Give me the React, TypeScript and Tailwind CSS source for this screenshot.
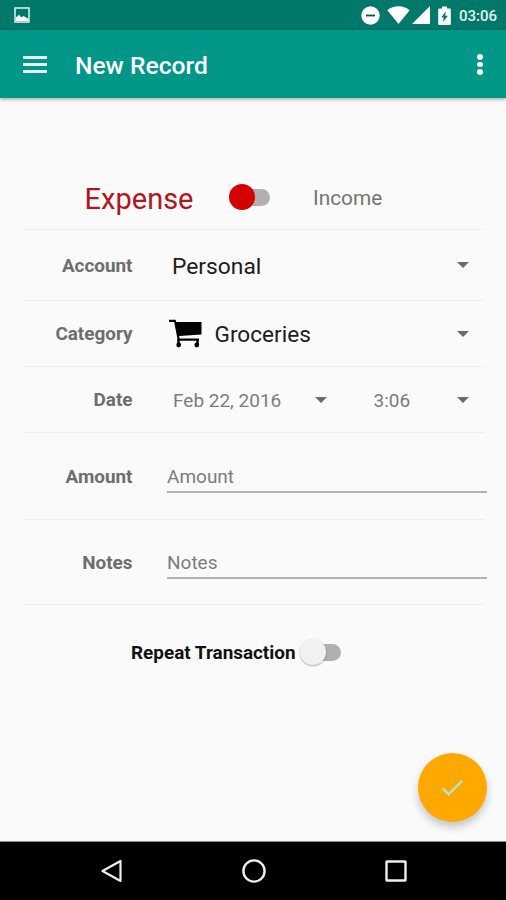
import { useState, type ReactNode } from "react";
import clsx from "clsx";

export default function App() {
  const [income, setIncome] = useState(false);
  const [repeat, setRepeat] = useState(false);

  return (
    <div className="relative flex h-[900px] w-[506px] flex-col overflow-hidden bg-[#fafafa] font-[Roboto,sans-serif]">
      <StatusBar />
      <AppBar title="New Record" />

      <main className="flex flex-1 flex-col pl-6 pr-[21px] pt-[67px]">
        <div className="flex h-[65px] items-center border-b border-[#efefef]">
          <span className="w-[169.5px] pt-1 text-right text-[29px] leading-none text-[#b3141c]">Expense</span>
          <Toggle label="Income" checked={income} onChange={setIncome} className="ml-[35px]" knobClassName="bg-[#d50000]" />
          <span className="ml-[43.5px] pt-[2px] text-[20.8px] leading-none text-[#757575]">Income</span>
        </div>

        <FormRow label="Account" className="h-[71px]">
          <Spinner className="ml-[39.5px] flex-1 pr-[16.5px] text-[22.8px] text-[#1c1c1c]">
            <span className="pt-1">Personal</span>
          </Spinner>
        </FormRow>

        <FormRow label="Category" className="h-[66px]">
          <Spinner className="ml-9 flex-1 pr-[16.5px] text-[22.6px] text-[#1c1c1c]">
            <CartIcon />
            <span className="ml-[13px] pt-1">Groceries</span>
          </Spinner>
        </FormRow>

        <FormRow label="Date" className="h-[66px]">
          <Spinner className="ml-[40.5px] w-[153.5px] text-[19px] text-[#7c7c7c]">
            <span className="pt-px">Feb 22, 2016</span>
          </Spinner>
          <Spinner className="ml-[47px] flex-1 pr-[16.5px] text-[19px] text-[#7c7c7c]">
            <span className="pt-px">3:06</span>
          </Spinner>
        </FormRow>

        <FormRow label="Amount" className="h-[87px]">
          <TextField placeholder="Amount" />
        </FormRow>

        <FormRow label="Notes" className="h-[85px]">
          <TextField placeholder="Notes" />
        </FormRow>

        <div className="mt-[33px] flex h-7 items-center pl-[107px]">
          <span className="w-[165px] whitespace-nowrap pt-[3px] text-[18.9px] font-bold leading-none text-[#111]">
            Repeat Transaction
          </span>
          <Toggle
            label="Repeat Transaction"
            checked={repeat}
            onChange={setRepeat}
            className="ml-1"
            knobClassName="bg-[#f1f1f1] shadow-[0_1px_2px_rgba(0,0,0,0.3)]"
          />
        </div>
      </main>

      <button
        aria-label="Save"
        className="absolute bottom-[78px] right-[19px] flex size-[69px] items-center justify-center rounded-full bg-[#ffa800] shadow-[0_5px_8px_rgba(0,0,0,0.22)]"
      >
        <svg className="size-[34px]" viewBox="0 0 24 24" fill="#b4e6c4">
          <path d="M9 16.170 4.830 12l-1.420 1.410L9 19 21 7l-1.410-1.410z" transform="translate(1.200 1.300) scale(.86)" />
        </svg>
      </button>

      <NavigationBar />
    </div>
  );
}

function StatusBar() {
  return (
    <div className="flex h-[30px] shrink-0 items-center bg-[#00796b] pl-[14px] pr-[9px] text-white">
      <svg className="size-4" viewBox="0 0 16 16" fill="none">
        <rect x="1" y="1" width="14" height="14" stroke="#d5ebe8" strokeWidth="1.6" />
        <path d="M2 14v-3.500L5 7.800l2.400 2.600 2-1.400L14 11.500V14z" fill="#fff" />
      </svg>
      <div className="ml-auto flex items-center">
        <svg className="size-[19px]" viewBox="0 0 19 19">
          <circle cx="9.5" cy="9.5" r="9.2" fill="#fff" />
          <path d="M5 9.5h9" stroke="#00584e" strokeWidth="1.8" />
        </svg>
        <svg className="ml-[7px] h-[18px] w-[23px]" viewBox="0 0 23 18">
          <path d="M11.5 18 .3 4.2C3.5 1.600 7.300.2 11.500.2s8 1.400 11.200 4z" fill="#fff" />
        </svg>
        <svg className="ml-[2px] size-[18px]" viewBox="0 0 18 18">
          <path d="M18 0v18H0z" fill="#fff" />
        </svg>
        <svg className="ml-2 h-[19px] w-[13px]" viewBox="0 0 13 19">
          <path d="M4 .5h5v2h2.800q1 0 1 1V18q0 1-1 1H1.200q-1 0-1-1V3.500q0-1 1-1H4z" fill="#fff" />
          <path d="M8 5.300 3.200 11.500h2.600L4.900 16.200 9.900 9.800H7.200z" fill="#00796b" />
        </svg>
        <span className="ml-2 w-[38px] pt-[3px] text-[15px] font-medium leading-none text-[#e0f2f0]">03:06</span>
      </div>
    </div>
  );
}

function AppBar(props: { title: string }) {
  return (
    <header className="flex h-[68px] shrink-0 items-center bg-[#009688] pl-[23px] pr-[23.5px] shadow-[0_1px_4px_rgba(0,0,0,0.4)]">
      <button aria-label="Menu" className="flex w-6 flex-col gap-1">
        <span className="h-[3px] bg-[#e8f6f4]" />
        <span className="h-[3px] bg-[#e8f6f4]" />
        <span className="h-[3px] bg-[#e8f6f4]" />
      </button>
      <h1 className="ml-7 pt-1 text-[24.6px] font-medium leading-none text-white">{props.title}</h1>
      <button aria-label="More options" className="ml-auto flex flex-col gap-[2px] pt-px">
        <span className="size-[5.5px] rounded-full bg-white" />
        <span className="size-[5.5px] rounded-full bg-white" />
        <span className="size-[5.5px] rounded-full bg-white" />
      </button>
    </header>
  );
}

function FormRow(props: { label: string; className: string; children: ReactNode }) {
  return (
    <div className={clsx("flex shrink-0 items-center border-b border-[#efefef]", props.className)}>
      <span className="w-[108.5px] shrink-0 pt-[2px] text-right text-[18.9px] font-bold leading-none text-[#6d6d6d]">
        {props.label}
      </span>
      {props.children}
    </div>
  );
}

function Spinner(props: { className: string; children: ReactNode }) {
  return (
    <button className={clsx("flex items-center whitespace-nowrap leading-none", props.className)}>
      {props.children}
      <svg className="ml-auto h-[6px] w-3" viewBox="0 0 12 6">
        <path d="M0 0h12L6 6z" fill="#6b6b6b" />
      </svg>
    </button>
  );
}

function TextField(props: { placeholder: string }) {
  return (
    <input
      placeholder={props.placeholder}
      className="-mr-[2px] ml-[34.5px] mt-[3px] h-[30px] min-w-0 flex-1 border-b-2 border-[#b2b2b2] bg-transparent text-[19px] leading-none text-[#1c1c1c] outline-none placeholder:text-[#7c7c7c]"
    />
  );
}

function Toggle(props: {
  label: string;
  checked: boolean;
  onChange: (checked: boolean) => void;
  className: string;
  knobClassName: string;
}) {
  return (
    <button
      role="switch"
      aria-label={props.label}
      aria-checked={props.checked}
      onClick={() => props.onChange(!props.checked)}
      className={clsx("relative flex h-[26px] w-[41px] items-center", props.className)}
    >
      <span className="ml-1 h-[17px] flex-1 rounded-full bg-[#b0b0b0]" />
      <span
        className={clsx(
          "absolute top-0 size-[26px] rounded-full",
          props.checked ? "right-0" : "left-0",
          props.knobClassName
        )}
      />
    </button>
  );
}

function CartIcon() {
  return (
    <svg className="h-[29px] w-[33px]" viewBox="0 0 33 29">
      <path d="M0 .8h6.500l.9 2.200H32.500v12.500L10.200 17l.4 2.500H30v2.200H8.800L5.200 3H0z" fill="#000" />
      <path d="M9.500 20v5M28.500 20v5" stroke="#000" strokeWidth="2.400" />
      <circle cx="9.700" cy="26" r="2.400" />
      <circle cx="27.800" cy="26" r="2.400" />
    </svg>
  );
}

function NavigationBar() {
  return (
    <nav className="flex h-[59px] shrink-0 items-center justify-between border-t border-[#8a8a8a] bg-black pl-[100px] pr-[99px] text-[#eee]">
      <svg className="size-6" viewBox="0 0 24 24" fill="none" stroke="currentColor" strokeWidth="2.200">
        <path d="M20.500 2v20L2.500 12z" strokeLinejoin="round" />
      </svg>
      <svg className="-ml-[2px] size-6" viewBox="0 0 24 24" fill="none" stroke="currentColor" strokeWidth="2.400">
        <circle cx="12" cy="12" r="10.600" />
      </svg>
      <svg className="size-[22px]" viewBox="0 0 22 22" fill="none" stroke="currentColor" strokeWidth="2.400">
        <rect x="1.500" y="1.500" width="19" height="19" rx=".5" />
      </svg>
    </nav>
  );
}
